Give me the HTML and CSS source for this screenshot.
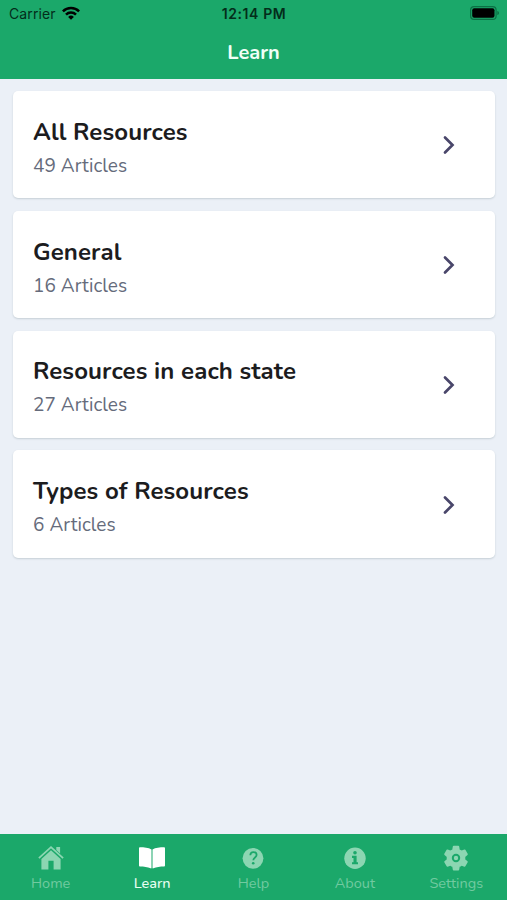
FILE: index.html
```html
<!DOCTYPE html>
<html lang="en">
<head>
<meta charset="utf-8">
<title>Learn</title>
<link rel="stylesheet" href="styles.css">
</head>
<body>
<div class="app">
  <header class="header">
    <div class="status">
      <div class="carrier"><span>Carrier</span>
        <svg class="wifi" viewBox="0 0 18 14"><g fill="none" stroke="currentColor" stroke-width="2.5"><path d="M.9 5.4a11.5 11.5 0 0 1 16.2 0"/><path d="M4 8.7a7 7 0 0 1 10 0"/></g><path fill="currentColor" d="M9 13.8 6.1 10.9a4.1 4.1 0 0 1 5.8 0Z"/></svg>
      </div>
      <time class="time">12:14 PM</time>
      <svg class="battery" viewBox="0 0 30 14"><rect x=".6" y=".6" width="25.5" height="12.8" rx="3.5" fill="none" stroke="#0b7145" stroke-width="1.2"/><rect x="2.2" y="2.2" width="22.3" height="9.6" rx="2" fill="#000"/><path d="M27.3 5v4c2.3-.7 2.3-3.3 0-4Z" fill="#0b7145"/></svg>
    </div>
    <h1 class="title">Learn</h1>
  </header>
  <main class="list">
    <a class="card"><div><h2 class="name">All Resources</h2><p class="count">49 Articles</p></div><svg class="chevron" viewBox="0 0 14 20"><path d="m3 2.5 7.5 7.5L3 17.5"/></svg></a>
    <a class="card"><div><h2 class="name">General</h2><p class="count">16 Articles</p></div><svg class="chevron" viewBox="0 0 14 20"><path d="m3 2.5 7.5 7.5L3 17.5"/></svg></a>
    <a class="card"><div><h2 class="name">Resources in each state</h2><p class="count">27 Articles</p></div><svg class="chevron" viewBox="0 0 14 20"><path d="m3 2.5 7.5 7.5L3 17.5"/></svg></a>
    <a class="card"><div><h2 class="name">Types of Resources</h2><p class="count">6 Articles</p></div><svg class="chevron" viewBox="0 0 14 20"><path d="m3 2.5 7.5 7.5L3 17.5"/></svg></a>
  </main>
  <nav class="tabs">
    <a class="tab"><svg class="icon" viewBox="0 0 26 26"><path fill="none" stroke="currentColor" stroke-width="1.8" d="m.9 13.2 12.1-11 12.1 11"/><path fill="currentColor" d="M18.3 1.9h3.8v6.5l-3.8-3.5ZM13 5.2l9.6 8.8v10.5h-7v-8.7h-5.2v8.7h-7V14Z"/></svg><span>Home</span></a>
    <a class="tab active"><svg class="icon" viewBox="0 0 26 26"><path fill="currentColor" d="M12.5 4.4C9.4 2.7 5.2 2.3.8 2.3Q0 2.3 0 3.2v17.3q0 .9.9.9c4 0 7.7.5 10.7 1.9q.9.4.9-.5ZM13.5 4.4C16.6 2.7 20.8 2.3 25.2 2.3q.8 0 .8.9v17.3q0 .9-.9.9c-4 0-7.7.5-10.7 1.9q-.9.4-.9-.5Z"/></svg><span>Learn</span></a>
    <a class="tab"><svg class="icon" viewBox="0 0 26 26"><circle cx="13" cy="13.3" r="10.4" fill="currentColor"/><path fill="none" stroke="#1ba86a" stroke-width="1.8" d="M10.3 10.2c.2-4.2 6.3-3.8 6.3-.2 0 2.5-3.3 2.5-3.3 5.3"/><circle cx="13.2" cy="18.2" r="1.3" fill="#1ba86a"/></svg><span>Help</span></a>
    <a class="tab"><svg class="icon" viewBox="0 0 26 26"><circle cx="13" cy="13.3" r="10.7" fill="currentColor"/><circle cx="13" cy="7.8" r="1.8" fill="#1ba86a"/><path fill="#1ba86a" d="M10 10.8h4.6v6.4H16v2.1h-6v-2.1h1.5v-4.3H10Z"/></svg><span>About</span></a>
    <a class="tab"><svg class="icon" viewBox="0 0 26 26"><path fill="currentColor" stroke="currentColor" stroke-width="1.8" stroke-linejoin="round" d="M10.7 1.7h4.6l.6 3.4q1.4.5 2.5 1.4l3.2-1.2 2.3 4-2.6 2.2q.3 1.6 0 3.2l2.6 2.2-2.3 4-3.2-1.2q-1.1.9-2.5 1.4l-.6 3.4h-4.6l-.6-3.4q-1.4-.5-2.5-1.4l-3.2 1.2-2.3-4 2.6-2.2q-.3-1.6 0-3.2L2.1 9.3l2.3-4 3.2 1.2q1.1-.9 2.5-1.4Z"/><circle cx="13" cy="13" r="3.2" fill="none" stroke="#1ba86a" stroke-width="2"/></svg><span>Settings</span></a>
  </nav>
</div>
</body>
</html>
```
FILE: styles.css
```css
* { box-sizing: border-box; }
body { margin: 0; font-family: Nunito, "Noto Sans", sans-serif; background: #ebf0f7; }
h1, h2, p { margin: 0; }
svg { display: block; flex: none; }
.app { height: 900px; display: flex; flex-direction: column; }
.header { height: 79px; background: #1ba86a; }
.status {
  height: 27px; display: grid; grid-template-columns: 1fr auto 1fr; align-items: center;
  padding: 0 7px 0 9px; font-family: Inter, sans-serif; font-size: 14px; color: #032d1a;
}
.carrier { display: flex; align-items: center; gap: 6px; letter-spacing: .1px; }
.wifi { width: 18px; height: 14px; margin-top: -2px; color: #000; }
.time { font-weight: 600; letter-spacing: .6px; margin-left: -1px; }
.battery { width: 30px; height: 14px; margin-top: -1px; justify-self: end; }
.title { text-align: center; font-size: 20px; line-height: 51px; font-weight: 700; color: #f1fff7; }
.list { flex: 1; padding: 12px 12.5px 0 13px; display: flex; flex-direction: column; gap: 12.5px; }
.card {
  height: 107.3px; padding: 0 39px 0 20px; display: flex; align-items: center; justify-content: space-between;
  background: #fff; border-radius: 5px; box-shadow: 0 1px 2px #c5ced5;
}
.card > div { padding-top: 8.5px; }
.name { font-size: 24px; line-height: 34px; font-weight: 700; color: #1c1c1e; letter-spacing: .1px; }
.count { font-size: 19px; line-height: 34px; color: #656b7b; letter-spacing: .05px; }
.chevron { width: 14px; height: 20px; margin-top: 1.5px; fill: none; stroke: #49466a; stroke-width: 2.7; stroke-linecap: round; }
.tabs { height: 66px; background: #1ba86a; display: grid; grid-template-columns: repeat(5, 1fr); }
.tab { display: flex; flex-direction: column; align-items: center; padding-top: 11px; color: #8cd6b2; font-size: 14.5px; line-height: 20px; }
.tab span { margin-top: 2px; color: #71caa0; }
.active { color: #fff; }
.active span { color: #e8fff2; font-weight: 500; }
.icon { width: 26px; height: 26px; }
```
